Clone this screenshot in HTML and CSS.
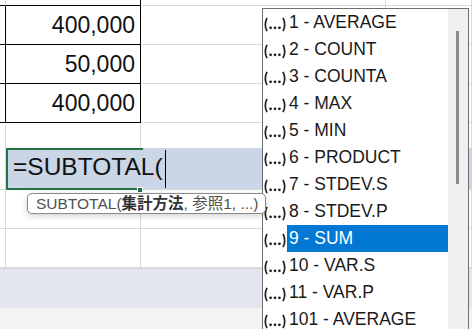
FILE: index.html
```html
<!DOCTYPE html>
<html lang="ja">
<head>
    <meta charset="UTF-8">
    <title>SUBTOTAL</title>
    <link rel="stylesheet" href="styles.css">
</head>
<body>
    <div class="screen">
        <div class="sheet">
            <div class="row row-top">
                <div class="cell col-a line-b"></div>
                <div class="cell col-b line-b line-r"></div>
                <div class="cell col-c"></div>
                <div class="cell col-d"></div>
            </div>
            <div class="row row-data">
                <div class="cell col-a line-b line-r"></div>
                <div class="cell col-b line-b line-r num">400,000</div>
                <div class="cell col-c"></div>
                <div class="cell col-d"></div>
            </div>
            <div class="row row-data">
                <div class="cell col-a line-b line-r"></div>
                <div class="cell col-b line-b line-r num">50,000</div>
                <div class="cell col-c"></div>
                <div class="cell col-d"></div>
            </div>
            <div class="row row-data">
                <div class="cell col-a line-b line-r"></div>
                <div class="cell col-b line-b line-r num">400,000</div>
                <div class="cell col-c"></div>
                <div class="cell col-d"></div>
            </div>
            <div class="row row-gap">
                <div class="cell col-a no-b"></div>
                <div class="cell col-b no-b"></div>
                <div class="cell col-c no-b"></div>
                <div class="cell col-d no-b"></div>
            </div>
            <div class="row row-edit">
                <div class="cell col-a"></div>
                <div class="edit">
                    <span class="formula">=SUBTOTAL(</span><span class="caret"></span>
                    <div class="active-frame"></div>
                    <div class="fill-handle"></div>
                </div>
            </div>
            <div class="row row-plain">
                <div class="cell col-a"></div>
                <div class="cell col-b"></div>
                <div class="cell col-c"></div>
                <div class="cell col-d"></div>
            </div>
            <div class="row row-plain">
                <div class="cell col-a"></div>
                <div class="cell col-b"></div>
                <div class="cell col-c"></div>
                <div class="cell col-d"></div>
            </div>
            <div class="band"></div>
            <div class="status"></div>
        </div>

        <div class="tooltip">SUBTOTAL(<b>集計方法</b>, 参照1, ...)</div>

        <div class="dropdown">
            <ul class="options">
                <li><svg class="fx" viewBox="0 0 24 15"><path d="M4 0.8 Q0.6 7.5 4 14.2"/><circle cx="7.6" cy="10.8" r="1.4"/><circle cx="12" cy="10.8" r="1.4"/><circle cx="16.4" cy="10.8" r="1.4"/><path d="M20 0.8 Q23.4 7.5 20 14.2"/></svg><span class="label">1 - AVERAGE</span></li>
                <li><svg class="fx" viewBox="0 0 24 15"><path d="M4 0.8 Q0.6 7.5 4 14.2"/><circle cx="7.6" cy="10.8" r="1.4"/><circle cx="12" cy="10.8" r="1.4"/><circle cx="16.4" cy="10.8" r="1.4"/><path d="M20 0.8 Q23.4 7.5 20 14.2"/></svg><span class="label">2 - COUNT</span></li>
                <li><svg class="fx" viewBox="0 0 24 15"><path d="M4 0.8 Q0.6 7.5 4 14.2"/><circle cx="7.6" cy="10.8" r="1.4"/><circle cx="12" cy="10.8" r="1.4"/><circle cx="16.4" cy="10.8" r="1.4"/><path d="M20 0.8 Q23.4 7.5 20 14.2"/></svg><span class="label">3 - COUNTA</span></li>
                <li><svg class="fx" viewBox="0 0 24 15"><path d="M4 0.8 Q0.6 7.5 4 14.2"/><circle cx="7.6" cy="10.8" r="1.4"/><circle cx="12" cy="10.8" r="1.4"/><circle cx="16.4" cy="10.8" r="1.4"/><path d="M20 0.8 Q23.4 7.5 20 14.2"/></svg><span class="label">4 - MAX</span></li>
                <li><svg class="fx" viewBox="0 0 24 15"><path d="M4 0.8 Q0.6 7.5 4 14.2"/><circle cx="7.6" cy="10.8" r="1.4"/><circle cx="12" cy="10.8" r="1.4"/><circle cx="16.4" cy="10.8" r="1.4"/><path d="M20 0.8 Q23.4 7.5 20 14.2"/></svg><span class="label">5 - MIN</span></li>
                <li><svg class="fx" viewBox="0 0 24 15"><path d="M4 0.8 Q0.6 7.5 4 14.2"/><circle cx="7.6" cy="10.8" r="1.4"/><circle cx="12" cy="10.8" r="1.4"/><circle cx="16.4" cy="10.8" r="1.4"/><path d="M20 0.8 Q23.4 7.5 20 14.2"/></svg><span class="label">6 - PRODUCT</span></li>
                <li><svg class="fx" viewBox="0 0 24 15"><path d="M4 0.8 Q0.6 7.5 4 14.2"/><circle cx="7.6" cy="10.8" r="1.4"/><circle cx="12" cy="10.8" r="1.4"/><circle cx="16.4" cy="10.8" r="1.4"/><path d="M20 0.8 Q23.4 7.5 20 14.2"/></svg><span class="label">7 - STDEV.S</span></li>
                <li><svg class="fx" viewBox="0 0 24 15"><path d="M4 0.8 Q0.6 7.5 4 14.2"/><circle cx="7.6" cy="10.8" r="1.4"/><circle cx="12" cy="10.8" r="1.4"/><circle cx="16.4" cy="10.8" r="1.4"/><path d="M20 0.8 Q23.4 7.5 20 14.2"/></svg><span class="label">8 - STDEV.P</span></li>
                <li class="selected"><svg class="fx" viewBox="0 0 24 15"><path d="M4 0.8 Q0.6 7.5 4 14.2"/><circle cx="7.6" cy="10.8" r="1.4"/><circle cx="12" cy="10.8" r="1.4"/><circle cx="16.4" cy="10.8" r="1.4"/><path d="M20 0.8 Q23.4 7.5 20 14.2"/></svg><span class="label">9 - SUM</span></li>
                <li><svg class="fx" viewBox="0 0 24 15"><path d="M4 0.8 Q0.6 7.5 4 14.2"/><circle cx="7.6" cy="10.8" r="1.4"/><circle cx="12" cy="10.8" r="1.4"/><circle cx="16.4" cy="10.8" r="1.4"/><path d="M20 0.8 Q23.4 7.5 20 14.2"/></svg><span class="label">10 - VAR.S</span></li>
                <li><svg class="fx" viewBox="0 0 24 15"><path d="M4 0.8 Q0.6 7.5 4 14.2"/><circle cx="7.6" cy="10.8" r="1.4"/><circle cx="12" cy="10.8" r="1.4"/><circle cx="16.4" cy="10.8" r="1.4"/><path d="M20 0.8 Q23.4 7.5 20 14.2"/></svg><span class="label">11 - VAR.P</span></li>
                <li><svg class="fx" viewBox="0 0 24 15"><path d="M4 0.8 Q0.6 7.5 4 14.2"/><circle cx="7.6" cy="10.8" r="1.4"/><circle cx="12" cy="10.8" r="1.4"/><circle cx="16.4" cy="10.8" r="1.4"/><path d="M20 0.8 Q23.4 7.5 20 14.2"/></svg><span class="label">101 - AVERAGE</span></li>
            </ul>
            <div class="scrollbar">
                <div class="thumb"></div>
            </div>
        </div>
    </div>
</body>
</html>
```

FILE: styles.css
```css
* {
    margin: 0;
    padding: 0;
    box-sizing: border-box;
}

body {
    font-family: "Liberation Sans", "Noto Sans CJK JP", sans-serif;
    background-color: #fff;
    color: #000;
    overflow: hidden;
}

.screen {
    position: relative;
    width: 472px;
    height: 329px;
    overflow: hidden;
}

/* sheet grid */

.row {
    display: flex;
}

.row-top { height: 6px; }
.row-data { height: 39px; }
.row-gap { height: 25px; }
.row-edit { height: 42px; }
.row-plain { height: 39px; }

.cell {
    border-right: 1px solid #dadada;
    border-bottom: 1px solid #dadada;
}

.col-a { width: 6px; }
.col-b { width: 135px; }
.col-c { width: 245px; }
.col-d { flex: 1; }

.line-b { border-bottom-color: #000; }
.line-r { border-right-color: #000; }
.no-b { border-bottom: none; }

.num {
    display: flex;
    align-items: center;
    justify-content: flex-end;
    padding-right: 5px;
    font-size: 23px;
    color: #111;
}

.edit {
    position: relative;
    flex: 1;
    display: flex;
    align-items: center;
    padding: 0 0 3px 7px;
    background-color: #cad6e6;
    border-bottom: 1px solid #dadada;
}

.formula {
    font-size: 24.5px;
    color: #111;
}

.caret {
    display: inline-block;
    width: 1px;
    height: 38px;
    margin: 3px 0 0 2px;
    background-color: #000;
}

.active-frame {
    position: absolute;
    left: 0;
    top: 0;
    width: 137px;
    height: 42px;
    border: 2px solid #217346;
    border-right: none;
}

.fill-handle {
    position: absolute;
    left: 131px;
    top: 39px;
    width: 6px;
    height: 6px;
    background-color: #217346;
    border: 1px solid #fff;
}

.band {
    height: 40px;
    background-color: #e4e6ed;
    border-top: 1px solid #d6d8de;
}

.status {
    height: 30px;
    background-color: #f3f3f3;
}

/* argument tooltip */

.tooltip {
    position: absolute;
    left: 27px;
    top: 193px;
    width: 239px;
    height: 21px;
    padding-left: 8px;
    border: 1px solid #8a8a8a;
    border-radius: 5px;
    background-color: #fff;
    box-shadow: 0 2px 6px rgba(0, 0, 0, 0.18);
    font-size: 15.5px;
    line-height: 19px;
    color: #505050;
    white-space: nowrap;
    z-index: 2;
}

.tooltip b {
    color: #333;
}

/* function list */

.dropdown {
    position: absolute;
    left: 262px;
    top: 8px;
    width: 207px;
    height: 340px;
    display: flex;
    background-color: #fff;
    border: 1px solid #6e6e6e;
    z-index: 1;
}

.options {
    list-style: none;
    flex: 1;
}

.options li {
    display: flex;
    align-items: center;
    height: 27px;
    color: #1a1a1a;
    font-size: 17.5px;
}

.fx {
    width: 24px;
    height: 15px;
    margin-top: 4px;
    fill: #222;
    stroke: #222;
}

.fx path {
    fill: none;
    stroke-width: 1.7;
}

.fx circle {
    stroke: none;
}

.label {
    flex: 1;
    height: 100%;
    display: flex;
    align-items: center;
    padding-left: 2px;
}

.selected .label {
    background-color: #0078d4;
    color: #fff;
}

.scrollbar {
    width: 20px;
    background-color: #f0f0f0;
    padding: 22px 0 0 8px;
}

.thumb {
    width: 3px;
    height: 153px;
    background-color: #8c8c8c;
}
```
